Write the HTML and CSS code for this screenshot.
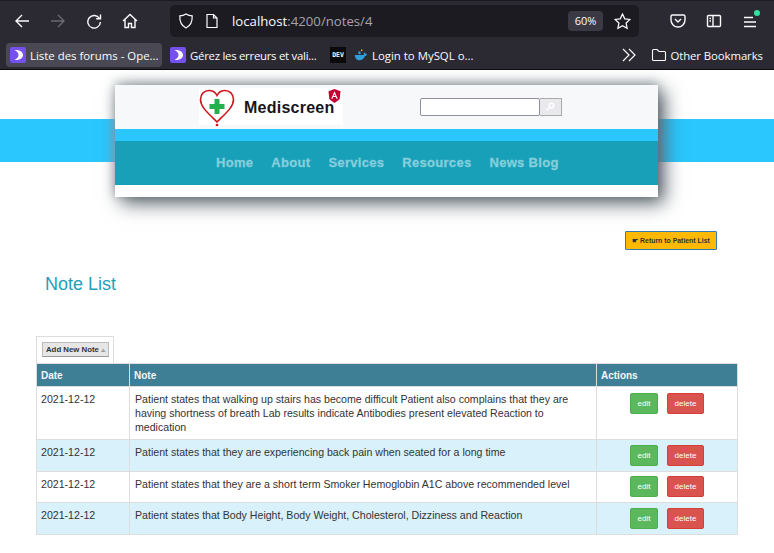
FILE: index.html
```html
<!DOCTYPE html>
<html lang="en">
<head>
    <meta charset="UTF-8">
    <title>Mediscreen</title>
    <link rel="stylesheet" href="styles.css">
</head>
<body>

<!-- browser chrome -->
<div class="chrome">
    <div class="toolbar">
        <svg class="tool-icon" viewBox="0 0 16 16"><path d="M15 8H2M8 2 2 8l6 6"/></svg>
        <svg class="tool-icon dim" viewBox="0 0 16 16"><path d="M1 8h13M8 2l6 6-6 6"/></svg>
        <svg class="tool-icon" viewBox="0 0 16 16"><path d="M13.500 5.500A6.300 6.300 0 1 0 14.400 9M14.500 1.500v4.300h-4.300"/></svg>
        <svg class="tool-icon" viewBox="0 0 16 16"><path d="M1 8l7-6.500L15 8M3 6.500V14.500h3.500v-4h3v4H13V6.500"/></svg>
        <div class="urlbar">
            <svg class="url-icon" viewBox="0 0 16 16"><path d="M8 1c2 1.300 4 1.800 6.200 1.800C14.500 9 12 13 8 15 4 13 1.500 9 1.800 2.800 4 2.800 6 2.300 8 1z"/></svg>
            <svg class="url-icon page" viewBox="0 0 16 16"><path d="M3 1.500h6.500l3.500 3.500v9.500H3zM9.500 1.500V5H13"/></svg>
            <span class="url">localhost<span class="url-rest">:4200/notes/4</span></span>
            <span class="zoom-level">60%</span>
            <svg class="url-icon star" viewBox="0 0 16 16"><path d="M8 1l2.100 4.500 4.900.6-3.600 3.400.9 4.900L8 12l-4.300 2.400.9-4.900L1 6.100l4.900-.6z"/></svg>
        </div>
        <svg class="tool-icon pocket" viewBox="0 0 16 16"><path d="M2.500 2h11A1.500 1.500 0 0 1 15 3.500V7A7 7 0 0 1 1 7V3.500A1.500 1.500 0 0 1 2.500 2zM5 6l3 3 3-3"/></svg>
        <svg class="tool-icon sidebar" viewBox="0 0 16 16"><path d="M2.500 2.500h11a1 1 0 0 1 1 1v9a1 1 0 0 1-1 1h-11a1 1 0 0 1-1-1v-9a1 1 0 0 1 1-1zM7 2.500v11M3.500 5.500h1.500M3.500 8h1.500"/></svg>
        <div class="menu-btn">
            <svg class="tool-icon" viewBox="0 0 16 16"><path d="M2 3.500h9M2 8h12M2 12.500h12"/></svg>
            <span class="menu-dot"></span>
        </div>
    </div>
    <div class="bookmarks">
        <div class="bookmark active">
            <svg class="oc-icon" viewBox="0 0 16 16"><rect width="16" height="16" rx="2" fill="#7451eb"/><path d="M4.500 3C9 2.700 13 4.300 13 8s-4 5.300-8.500 5C7.500 11.500 8.500 9.700 8.500 8S7.500 4.500 4.500 3z" fill="#fff"/></svg>
            Liste des forums - Ope...</div>
        <div class="bookmark tight">
            <svg class="oc-icon" viewBox="0 0 16 16"><rect width="16" height="16" rx="2" fill="#7451eb"/><path d="M4.500 3C9 2.700 13 4.300 13 8s-4 5.300-8.500 5C7.500 11.500 8.500 9.700 8.500 8S7.500 4.500 4.500 3z" fill="#fff"/></svg>
            Gérez les erreurs et vali...</div>
        <div class="bookmark"><span class="dev-icon">DEV</span>
            <svg class="whale" viewBox="0 0 16 16"><path d="M1 8h10c.5-1 .5-2 0-3 1 0 2 .5 2.500 1.500L15 7c-.5 1.500-1.500 2-2.500 2C11.500 12 9 14 6 14 3 14 1 11.500 1 8z" fill="#2f9fd8"/><path d="M8 1.500a2 2 0 0 1 2 2H8z" fill="#e8a33d"/><path d="M5 4h2.500v3H5z" fill="#2f9fd8"/></svg>
            Login to MySQL o...</div>
        <svg class="chevrons" viewBox="0 0 14 14"><path d="M1 1l6 6-6 6M7 1l6 6-6 6"/></svg>
        <div class="bookmark other">
            <svg class="folder" viewBox="0 0 16 16"><path d="M1.500 3.500a1 1 0 0 1 1-1h3.500l2 2h5.500a1 1 0 0 1 1 1v7a1 1 0 0 1-1 1h-11a1 1 0 0 1-1-1z"/></svg>
            Other Bookmarks</div>
    </div>
</div>

<!-- page -->
<div class="page">
    <div class="masthead">
        <div class="band"></div>
        <div class="card">
            <div class="card-top">
                <div class="logo">
                    <svg class="heart" viewBox="0 0 36 38">
                        <path d="M18 33 C9 24 1.500 18 1.500 10.500 C1.500 5 5.500 1.500 10 1.500 C13.500 1.500 16.500 3.500 18 6.500 C19.500 3.500 22.500 1.500 26 1.500 C30.500 1.500 34.500 5 34.500 10.500 C34.500 18 27 24 18 33z" fill="none" stroke="#d0161b" stroke-width="1.600"/>
                        <path d="M15.500 10h5v5h5v5h-5v5h-5v-5h-5v-5h5z" fill="#22b14c"/>
                        <circle cx="18" cy="36" r="1.300" fill="#d0161b"/>
                    </svg>
                    <span class="logo-text">Mediscreen</span>
                    <svg class="ng" viewBox="0 0 14 15">
                        <path d="M7 0 .5 2.300l1 8.700L7 15l5.500-4 1-8.700z" fill="#c3002f"/>
                        <path d="M7 2.500 3.500 10.500h1.400l.7-1.800h2.800l.7 1.800h1.400zM6.100 7.600 7 5.300l.9 2.300z" fill="#fff"/>
                    </svg>
                </div>
                <form class="search">
                    <input class="search-input" type="text">
                    <button class="search-btn" type="button">
                        <svg viewBox="0 0 10 10"><circle cx="6.500" cy="3.500" r="2.200" fill="none" stroke="#fff" stroke-width="1.500"/><path d="M5 5 1.500 8.500" stroke="#fff" stroke-width="1.500"/></svg>
                    </button>
                </form>
            </div>
            <div class="card-strip"></div>
            <ul class="nav">
                <li>Home</li>
                <li>About</li>
                <li>Services</li>
                <li>Resources</li>
                <li>News Blog</li>
            </ul>
        </div>
    </div>

    <div class="return-row">
        <a class="btn-return"><span class="pointer">☛</span> Return to Patient List</a>
    </div>

    <h2 class="title">Note List</h2>

    <div class="notes">
        <div class="add-box">
            <button class="btn-add" type="button">Add New Note <span class="add-icon">⟁</span></button>
        </div>
        <table class="note-table">
            <thead>
                <tr><th class="col-date">Date</th><th class="col-note">Note</th><th>Actions</th></tr>
            </thead>
            <tbody>
                <tr>
                    <td>2021-12-12</td>
                    <td class="note-text">Patient states that walking up stairs has become difficult Patient also complains that they are having shortness of breath Lab results indicate Antibodies present elevated Reaction to medication</td>
                    <td class="actions"><a class="btn btn-edit">edit</a><a class="btn btn-delete">delete</a></td>
                </tr>
                <tr>
                    <td>2021-12-12</td>
                    <td class="note-text">Patient states that they are experiencing back pain when seated for a long time</td>
                    <td class="actions"><a class="btn btn-edit">edit</a><a class="btn btn-delete">delete</a></td>
                </tr>
                <tr>
                    <td>2021-12-12</td>
                    <td class="note-text">Patient states that they are a short term Smoker Hemoglobin A1C above recommended level</td>
                    <td class="actions"><a class="btn btn-edit">edit</a><a class="btn btn-delete">delete</a></td>
                </tr>
                <tr>
                    <td>2021-12-12</td>
                    <td class="note-text">Patient states that Body Height, Body Weight, Cholesterol, Dizziness and Reaction</td>
                    <td class="actions"><a class="btn btn-edit">edit</a><a class="btn btn-delete">delete</a></td>
                </tr>
            </tbody>
        </table>
    </div>
</div>

</body>
</html>
```

FILE: styles.css
```css
* { box-sizing: border-box; }
html, body { margin: 0; padding: 0; }
body {
    background: #fff;
    font-family: "Liberation Sans", Arial, sans-serif;
    overflow: hidden;
    height: 553px;
}

/* browser chrome */
.chrome {
    height: 70px;
    background: #2b2a33;
    border-top: 1px solid #1c1b22;
    border-bottom: 1px solid #0c0c0d;
    font-family: "Open Sans", sans-serif;
    color: #fbfbfe;
}
.toolbar {
    height: 40px;
    display: flex;
    align-items: center;
    padding-left: 14px;
}
.tool-icon {
    width: 16px;
    height: 16px;
    margin-right: 20px;
    fill: none;
    stroke: #fbfbfe;
    stroke-width: 1.4;
    flex: none;
}
.tool-icon.dim { stroke: #6a6a72; }
.urlbar {
    width: 469px;
    height: 32px;
    margin: 0 31px 0 12px;
    padding: 0 8px;
    background: #1c1b22;
    border-radius: 5px;
    display: flex;
    align-items: center;
    font-size: 13.200px;
}
.url-icon {
    width: 16px;
    height: 16px;
    fill: none;
    stroke: #fbfbfe;
    stroke-width: 1.2;
    flex: none;
}
.url-icon.page { margin-left: 10px; }
.url { margin-left: 12px; flex: 1; }
.url-rest { color: #a5a5ab; }
.zoom-level {
    width: 35px;
    height: 20px;
    line-height: 20px;
    margin-right: 11px;
    text-align: center;
    font-size: 11px;
    background: #3a3944;
    border-radius: 4px;
}
.star { width: 17px; height: 17px; }
.tool-icon.pocket { margin-right: 20px; }
.tool-icon.sidebar { margin-right: 20px; }
.menu-btn { position: relative; width: 16px; height: 16px; }
.menu-dot {
    position: absolute;
    top: -3px;
    right: -2px;
    width: 6px;
    height: 6px;
    border-radius: 50%;
    background: #30e1a0;
}
.bookmarks {
    height: 28px;
    display: flex;
    align-items: center;
    padding-left: 6px;
    font-size: 11.400px;
}
.bookmark {
    height: 24px;
    padding: 0 4px;
    margin-right: 4px;
    display: flex;
    align-items: center;
    border-radius: 4px;
    white-space: nowrap;
}
.bookmark.active { background: #4a4953; width: 156px; }
.bookmark.tight { letter-spacing: -.27px; width: 156px; }
.oc-icon {
    width: 16px;
    height: 16px;
    margin-right: 4px;
    flex: none;
}
.dev-icon {
    width: 16px;
    height: 16px;
    margin-right: 8px;
    background: #0a0a0a;
    font: bold 6.500px/16px "DejaVu Sans Mono", monospace;
    text-align: center;
}
.whale { width: 14px; height: 14px; margin-right: 4px; }
.chevrons {
    width: 14px;
    height: 14px;
    margin-left: 141px;
    fill: none;
    stroke: #fbfbfe;
    stroke-width: 1.2;
}
.bookmark.other { margin: 0 0 0 11px; letter-spacing: -.1px; }
.folder {
    width: 16px;
    height: 16px;
    margin-right: 3px;
    fill: none;
    stroke: #fbfbfe;
    stroke-width: 1.1;
}

/* page */
.masthead {
    display: grid;
    height: 127px;
}
.band, .card { grid-area: 1 / 1; }
.band {
    height: 43px;
    margin-top: 49px;
    background: #29c7fd;
}
.card {
    width: 543px;
    height: 112px;
    margin: 15px 0 0 115px;
    background: #fff;
    box-shadow: 6px 6px 18px #555f66, 0 -2px 10px #aab2b6;
}
.card-top {
    height: 44px;
    background: #f7f8fa;
    display: flex;
    padding-top: 3px;
}
.logo {
    width: 144px;
    height: 37px;
    margin-left: 84px;
    background: #fff;
    display: flex;
    position: relative;
}
.heart { width: 36px; height: 38px; margin-top: 1px; flex: none; }
.logo-text {
    margin: 11px 0 0 9px;
    font-size: 16px;
    font-weight: bold;
    letter-spacing: .25px;
    color: #16161a;
}
.ng {
    position: absolute;
    right: 2px;
    top: 1px;
    width: 13px;
    height: 14px;
}
.search {
    display: flex;
    margin: 10px 0 0 77px;
}
.search-input {
    width: 120px;
    height: 18px;
    padding: 0;
    border: 1px solid #8f8f9d;
    border-radius: 2px;
    background: #fff;
}
.search-btn {
    width: 22px;
    height: 18px;
    padding: 3px 5px;
    border: 1px solid #aaa;
    border-width: 1px 1px 1px 0;
    background: #e9e9ed;
}
.search-btn svg { display: block; width: 10px; height: 10px; }
.card-strip { height: 12px; background: #29c7fd; }
.nav {
    list-style: none;
    margin: 0;
    padding: 0 0 2px 101px;
    height: 44px;
    background: #18a0b8;
    display: flex;
    align-items: center;
    gap: 18px;
    font-size: 13px;
    font-weight: bold;
    letter-spacing: .3px;
    color: #85cedd;
    -webkit-text-stroke: .3px #85cedd;
}

.return-row {
    display: flex;
    justify-content: flex-end;
    padding: 34px 57px 0 0;
}
.btn-return {
    width: 92px;
    height: 19px;
    line-height: 17px;
    text-align: center;
    background: #ffb900;
    border: 1px solid #337ab7;
    border-radius: 1px;
    font-size: 6.900px;
    font-weight: bold;
    color: #333;
    white-space: nowrap;
}
.pointer { font-size: 6.500px; }
.title {
    margin: 23px 0 0 45px;
    font-size: 18px;
    line-height: 22px;
    font-weight: normal;
    color: #1f9fb8;
}
.notes { margin: 41px 36px 0; }
.add-box {
    width: 78px;
    height: 27px;
    padding: 5px;
    border: 1px solid #ddd;
    border-bottom: 0;
}
.btn-add {
    display: block;
    width: 67px;
    height: 15px;
    padding: 0;
    background: #e6e6e6;
    border: 1px solid #bbb;
    border-bottom-color: #999;
    font: bold 7.800px "Liberation Sans", Arial, sans-serif;
    color: #333;
    white-space: nowrap;
}
.add-icon { font-size: 5px; font-weight: normal; color: #666; }
.note-table {
    width: 702px;
    border-collapse: collapse;
    table-layout: fixed;
    font-size: 10.600px;
    color: #333;
}
.note-table th, .note-table td {
    border: 1px solid #ddd;
    padding: 5px 4px;
    text-align: left;
    vertical-align: top;
    line-height: 14px;
}
.note-table th {
    height: 23px;
    padding: 5px 4px 3px;
    background: #3f7f96;
    color: #f2f6f8;
    font-weight: bold;
    font-size: 10px;
}
.col-date { width: 93px; }
.col-note { width: 467px; }
.note-table tbody tr:nth-child(even) { background: #d9f1fb; }
.note-table .note-text { padding: 5px 26px 5px 5px; }
.note-table .actions {
    padding: 5px 33px;
    line-height: 0;
    white-space: nowrap;
}
.note-table tr:first-child .actions { padding-top: 6px; }
.note-table tr:nth-child(3) .actions { padding-top: 4px; }
.btn {
    display: inline-block;
    height: 21px;
    line-height: 20px;
    text-align: center;
    font-size: 8px;
    color: #fff;
    border-radius: 2px;
    border: 1px solid transparent;
}
.btn-edit {
    width: 28px;
    margin-right: 9px;
    background: #5cb85c;
    border-color: #4cae4c;
}
.btn-delete {
    width: 37px;
    background: #d9534f;
    border-color: #d43f3a;
}
```
